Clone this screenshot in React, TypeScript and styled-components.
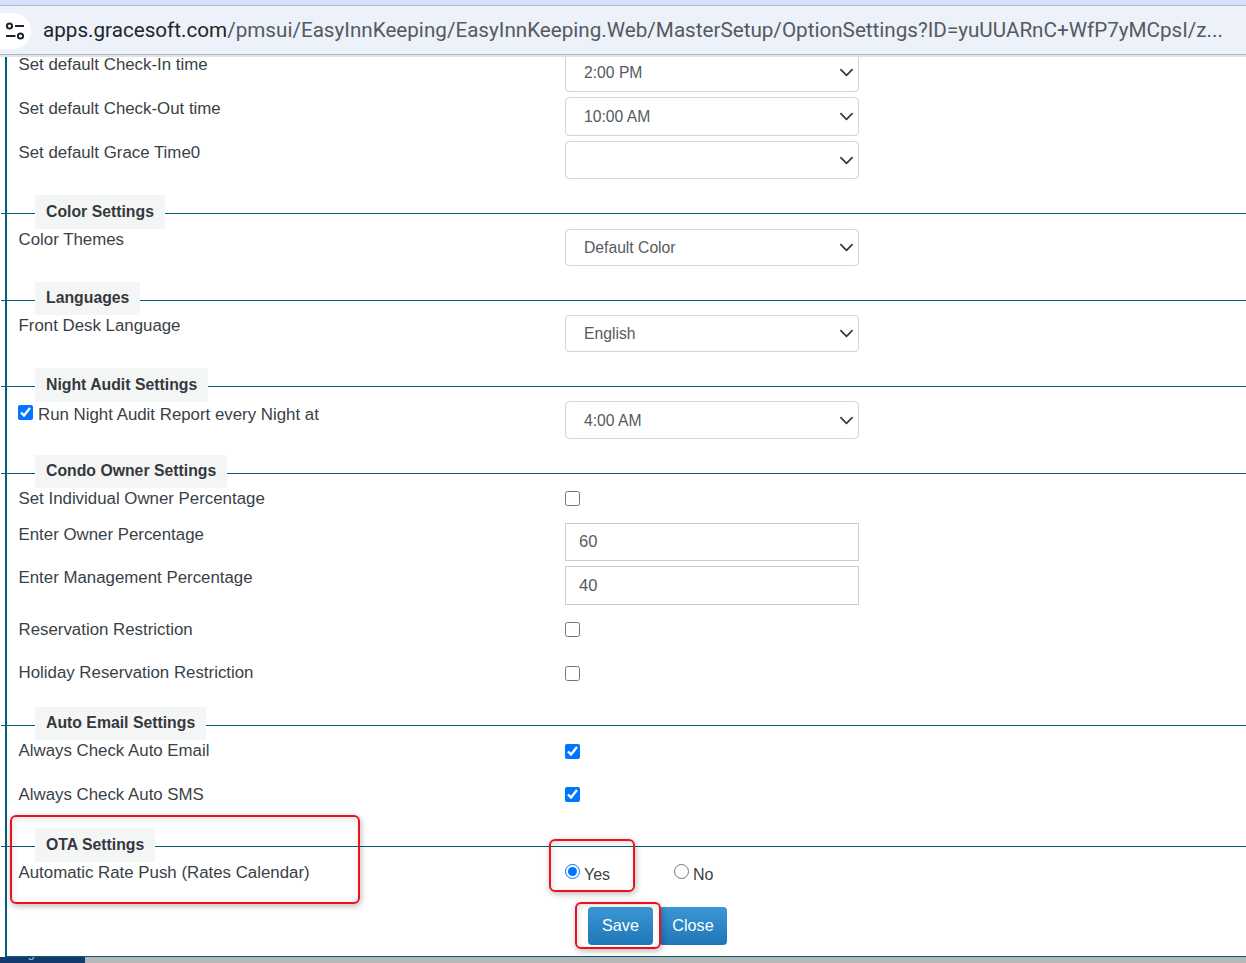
import React from "react";
import styled, { createGlobalStyle } from "styled-components";

const Global = createGlobalStyle`
  html, body { margin: 0; padding: 0; height: 100%; background: #fff; overflow: hidden; }
  body { font-family: "Liberation Sans", Arial, sans-serif; font-size: 16.85px; color: #3a3f47; }
  * { box-sizing: border-box; }
`;

const Page = styled.div`
  width: 1246px; height: 963px; display: flex; flex-direction: column; position: relative; overflow: hidden;
`;
const BrowserTop = styled.div`height: 5px; background: #d3e3fd; border-bottom: 1px solid #b3b7bf; flex: none; box-sizing: content-box;`;
const UrlBar = styled.div`
  height: 49px; flex: none; background: #ecf1fa; border-bottom: 1px solid #b4b6ba; display: flex; align-items: center; gap: 12px; padding-left: 0;
`;
const TuneBadge = styled.div`
  width: 31px; height: 36px; margin-top: 2px; border-radius: 0 18px 18px 0; background: #fff; display: flex; align-items: center; justify-content: center; flex: none;
`;
const Url = styled.div`
  font-family: Roboto, sans-serif; font-size: 20.65px; color: #555a60; white-space: nowrap;
  b { font-weight: 400; color: #22252a; }
`;
const ChromeShade = styled.div`height: 2px; background: #e3e3e3; flex: none;`;
const Viewport = styled.div`flex: 1; min-height: 0; overflow: hidden;`;
const Content = styled.div`
  margin: -4px 0 0 5px; border-left: 2px solid #005f7a; border-bottom: 2px solid #005f7a; padding-left: 11.5px;
`;
const Header = styled.div<{ $h: number }>`
  display: flex; align-items: flex-start; height: ${(p) => p.$h}px; margin-left: -17.5px; position: relative;
  &::before { content: ""; flex: none; width: 34px; height: 1px; margin-top: 18px; background: #005f7a; }
  &::after { content: ""; flex: 1; height: 1px; margin-top: 18px; background: #005f7a; }
`;
const Legend = styled.div<{ $h: number }>`
  height: ${(p) => p.$h}px; background: #f4f6f6; font-weight: 700; font-size: 15.8px; color: #35383d; padding: 0 11px; line-height: ${(p) => p.$h - 1}px; flex: none;
`;
const Row = styled.div<{ $h: number }>`
  display: grid; grid-template-columns: 546.5px 294px; height: ${(p) => p.$h}px; align-items: start;
`;
const Label = styled.label<{ $top: number }>`
  display: flex; align-items: center; gap: 5px; line-height: 22px; margin-top: ${(p) => p.$top}px; white-space: nowrap;
`;
const chevron = `url("data:image/svg+xml,%3csvg xmlns='http://www.w3.org/2000/svg' viewBox='0 0 16 16'%3e%3cpath fill='none' stroke='%23343a40' stroke-linecap='round' stroke-linejoin='round' stroke-width='1.8' d='M2 5l6 6 6-6'/%3e%3c/svg%3e")`;
const Select = styled.select<{ $h: number }>`
  appearance: none; width: 294px; height: ${(p) => p.$h}px; border: 1px solid #ced4da; border-radius: 4px; background: #fff ${chevron} no-repeat right 4px center / 15px 15px;
  padding: 0 30px 0 18px; font: inherit; font-size: 15.7px; color: #555b61; margin: 0; display: block;
`;
const TextInput = styled.input<{ $h: number }>`
  width: 294px; height: ${(p) => p.$h}px; border: 1px solid #ccc; padding: 0 13px 1px; font: inherit; font-size: 16.5px; color: #555b61; display: block; margin: 0; outline: none; border-radius: 0;
`;
const Check = styled.input.attrs({ type: "checkbox" })<{ $top?: number }>`
  width: 15px; height: 15px; margin: ${(p) => p.$top ?? 0}px 0 0 0; display: block; accent-color: #0075ff; flex: none;
`;
const InlineCheck = styled(Check)`
  margin: -6px 0 0 -0.5px;
`;
const RadioGroup = styled.div`display: flex; align-items: flex-start; height: 24px; margin-top: 2px;`;
const RadioLabel = styled.label`
  display: flex; align-items: flex-start; gap: 4px; width: 109px; color: #3a3f47; font-size: 16px; line-height: 20px;
  span { margin-top: 1px; }
`;
const Radio = styled.input.attrs({ type: "radio" })`
  width: 15px; height: 15px; margin: 0; accent-color: #0075ff; flex: none;
`;
const Buttons = styled.div`
  height: 49px; display: flex; padding-left: 569.5px; gap: 6px;
`;
const Button = styled.button<{ $w: number }>`
  width: ${(p) => p.$w}px; height: 38px; border: none; border-radius: 4px; color: #fff; font: inherit; font-size: 16.2px; padding: 0 0 2px;
  background: linear-gradient(#3a97d4, #1f76b7);
`;
const BottomBar = styled.div`flex: none; height: 6px; background: #b7b7b7; display: flex;`;
const BottomTab = styled.div`
  width: 85px; background: #123a6b; color: #b9c4d2; font-size: 13px; line-height: 14px; overflow: hidden; padding: 0 0 3px 13px; display: flex; align-items: flex-end;
  span { flex: none; }
`;
const Callout = styled.div<{ $x: number; $y: number; $w: number; $h: number }>`
  position: absolute; left: ${(p) => p.$x}px; top: ${(p) => p.$y}px; width: ${(p) => p.$w}px; height: ${(p) => p.$h}px;
  border: 2px solid #f0101c; border-radius: 6px; box-shadow: 1px 2px 6px rgba(0,0,0,.28), inset 1px 2px 6px rgba(0,0,0,.12); pointer-events: none;
`;

const TuneIcon = () => (
  <svg width="21" height="20" viewBox="0 0 21 20" fill="none" stroke="#1f2328" strokeWidth="2">
    <circle cx="4.5" cy="5" r="2.6" />
    <path d="M10 5h9" />
    <circle cx="15.5" cy="15" r="2.6" />
    <path d="M1 15h9.5" />
  </svg>
);

const App = () => (
  <Page>
    <Global />
    <BrowserTop />
    <UrlBar>
      <TuneBadge><TuneIcon /></TuneBadge>
      <Url><b>apps.gracesoft.com</b>/pmsui/EasyInnKeeping/EasyInnKeeping.Web/MasterSetup/OptionSettings?ID=yuUUARnC+WfP7yMCpsI/z...</Url>
    </UrlBar>
    <ChromeShade />
    <Viewport>
      <Content>
        <Row $h={44}><Label $top={1}>Set default Check-In time</Label><Select $h={39} defaultValue="2"><option value="2">2:00 PM</option></Select></Row>
        <Row $h={44}><Label $top={1}>Set default Check-Out time</Label><Select $h={39} defaultValue="10"><option value="10">10:00 AM</option></Select></Row>
        <Row $h={54}><Label $top={1}>Set default Grace Time0</Label><Select $h={38}><option></option></Select></Row>

        <Header $h={34}><Legend $h={34}>Color Settings</Legend></Header>
        <Row $h={53}><Label $top={0}>Color Themes</Label><Select $h={37}><option>Default Color</option></Select></Row>

        <Header $h={33}><Legend $h={33}>Languages</Legend></Header>
        <Row $h={53}><Label $top={0}>Front Desk Language</Label><Select $h={37}><option>English</option></Select></Row>

        <Header $h={33}><Legend $h={34}>Night Audit Settings</Legend></Header>
        <Row $h={54}><Label $top={3}><InlineCheck defaultChecked />Run Night Audit Report every Night at</Label><Select $h={38}><option>4:00 AM</option></Select></Row>

        <Header $h={33}><Legend $h={33}>Condo Owner Settings</Legend></Header>
        <Row $h={35}><Label $top={0}>Set Individual Owner Percentage</Label><Check $top={3} /></Row>
        <Row $h={43}><Label $top={1}>Enter Owner Percentage</Label><TextInput $h={38} defaultValue="60" /></Row>
        <Row $h={52}><Label $top={1}>Enter Management Percentage</Label><TextInput $h={39} defaultValue="40" /></Row>
        <Row $h={43}><Label $top={1}>Reservation Restriction</Label><Check $top={4} /></Row>
        <Row $h={46}><Label $top={1}>Holiday Reservation Restriction</Label><Check $top={5} /></Row>

        <Header $h={33}><Legend $h={33}>Auto Email Settings</Legend></Header>
        <Row $h={44}><Label $top={0}>Always Check Auto Email</Label><Check $top={4} defaultChecked /></Row>
        <Row $h={44}><Label $top={0}>Always Check Auto SMS</Label><Check $top={3} defaultChecked /></Row>

        <Header $h={34}><Legend $h={34}>OTA Settings</Legend></Header>
        <Row $h={45}>
          <Label $top={0}>Automatic Rate Push (Rates Calendar)</Label>
          <RadioGroup>
            <RadioLabel><Radio name="push" defaultChecked /><span>Yes</span></RadioLabel>
            <RadioLabel><Radio name="push" /><span>No</span></RadioLabel>
          </RadioGroup>
        </Row>
        <Buttons>
          <Button $w={65}>Save</Button>
          <Button $w={68}>Close</Button>
        </Buttons>
      </Content>
    </Viewport>
    <BottomBar><BottomTab><span>Logout</span></BottomTab></BottomBar>
    <Callout $x={10} $y={815} $w={350} $h={89} />
    <Callout $x={549} $y={839} $w={86} $h={53} />
    <Callout $x={575} $y={902} $w={86} $h={47} />
  </Page>
);

export default App;
